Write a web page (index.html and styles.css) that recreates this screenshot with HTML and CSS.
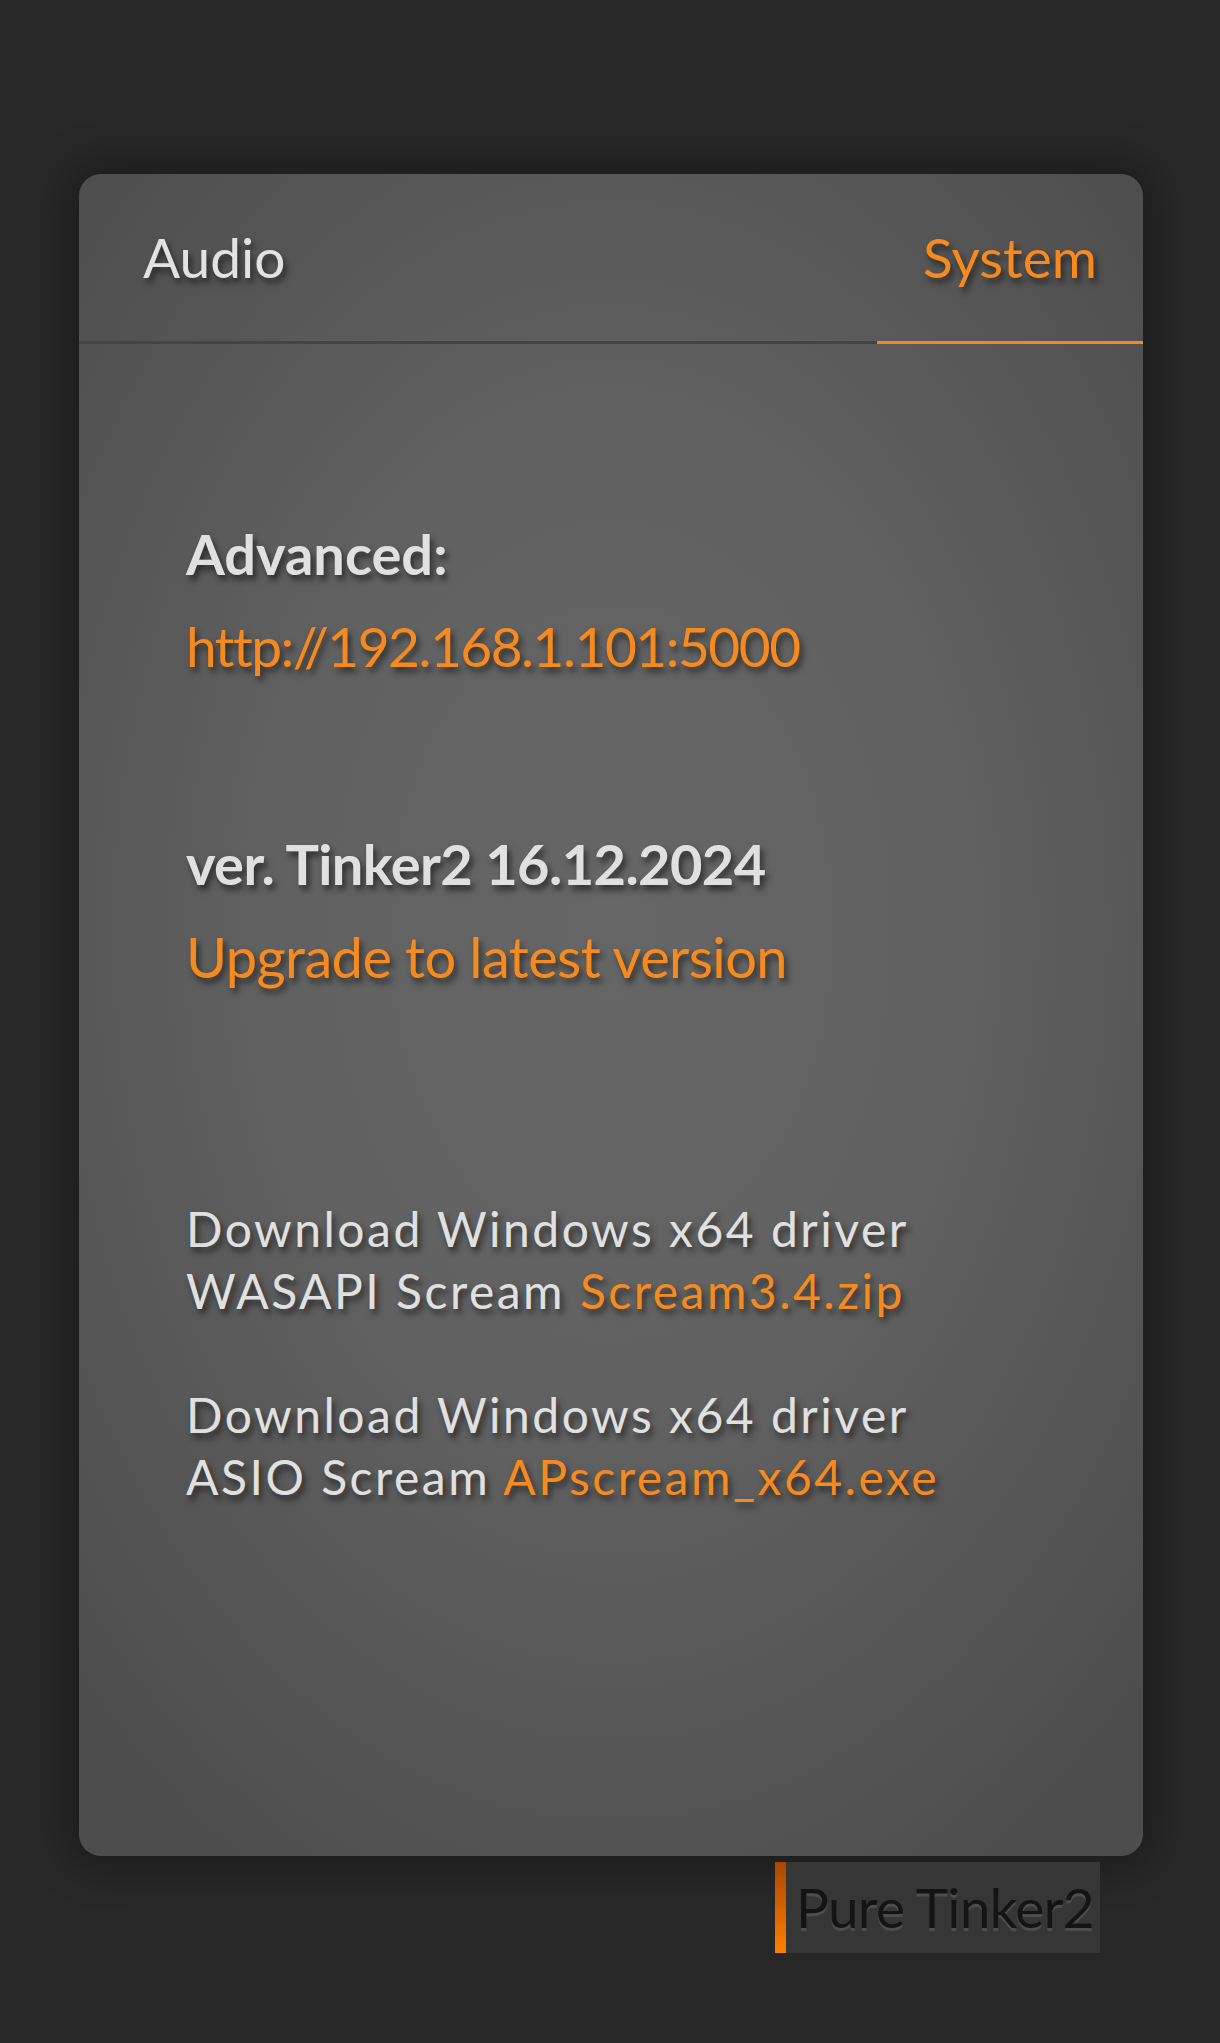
FILE: index.html
```html
<!DOCTYPE html>
<html>
<head>
<meta charset="utf-8">
<link rel="stylesheet" href="styles.css">
</head>
<body>
<div class="page">
  <div class="card">
    <div class="tabs">
      <div class="tab tab-audio">Audio</div>
      <div class="tab tab-system">System</div>
    </div>
    <div class="content">
      <div class="block block-adv">
        <div class="line bold">Advanced:</div>
        <div class="line link url">http://192.168.1.101:5000</div>
      </div>
      <div class="block block-ver">
        <div class="line bold tight">ver. Tinker2 16.12.2024</div>
        <div class="line link tight">Upgrade to latest version</div>
      </div>
      <div class="block block-dl1">
        <div class="small">Download Windows x64 driver</div>
        <div class="small">WASAPI Scream <span class="link">Scream3.4.zip</span></div>
      </div>
      <div class="block block-dl2">
        <div class="small">Download Windows x64 driver</div>
        <div class="small">ASIO Scream <span class="link">APscream_x64.exe</span></div>
      </div>
    </div>
  </div>
  <div class="brand">
    <div class="brand-bar"></div>
    <div class="brand-text">Pure Tinker2</div>
  </div>
</div>
</body>
</html>
```
FILE: styles.css
```css
html, body {
  margin: 0;
  padding: 0;
}
body {
  background: #282828;
  font-family: Lato, "Open Sans", sans-serif;
  color: #e0e0e0;
  width: 1220px;
  height: 2043px;
  overflow: hidden;
}
.page {
  padding-top: 174px;
}
.card {
  margin-left: 79px;
  width: 1064px;
  height: 1682px;
  border-radius: 22px;
  background: radial-gradient(ellipse 70% 65% at 50% 45%, #666666 0%, #616161 45%, #4d4d4d 100%);
  box-shadow: 0 0 40px 12px rgba(0, 0, 0, 0.3);
  overflow: hidden;
}
.tabs {
  display: flex;
  height: 167px;
  border-bottom: 3px solid #444444;
}
.tab {
  font-size: 55px;
  line-height: 167px;
  height: 167px;
  text-shadow: 3px 5px 6px rgba(0, 0, 0, 0.55);
}
.tab-audio {
  flex: 1;
  padding-left: 64px;
  color: #e2e2e2;
}
.tab-system {
  width: 266px;
  text-align: center;
  color: #f78a1f;
  border-bottom: 3px solid #f08a1e;
  margin-bottom: -3px;
}
.content {
  padding-left: 107px;
  padding-top: 163px;
}
.line {
  font-size: 56px;
  line-height: 93px;
  white-space: nowrap;
  text-shadow: 3px 5px 6px rgba(0, 0, 0, 0.55);
}
.url {
  font-size: 55px;
  letter-spacing: -1.5px;
}
.tight {
  letter-spacing: -0.6px;
}
.bold {
  font-weight: 700;
  color: #e0e0e0;
}
.link {
  color: #f78a1f;
}
.small {
  font-size: 48px;
  line-height: 62px;
  letter-spacing: 2.5px;
  white-space: nowrap;
  color: #e0e0e0;
  text-shadow: 3px 5px 6px rgba(0, 0, 0, 0.55);
}
.block-ver {
  margin-top: 124px;
}
.block-dl1 {
  margin-top: 195px;
}
.block-dl2 {
  margin-top: 62px;
}
.brand {
  display: flex;
  margin-top: 6px;
  margin-left: 775px;
  width: 325px;
  height: 91px;
  background: #363636;
}
.brand-bar {
  flex: 0 0 11px;
  width: 11px;
  background: linear-gradient(#a84600, #ff8000);
}
.brand-text {
  padding-left: 10px;
  font-size: 55px;
  letter-spacing: -0.8px;
  line-height: 91px;
  color: #141414;
  text-shadow: 0 3px 1px rgba(255, 255, 255, 0.12);
  white-space: nowrap;
  overflow: hidden;
}
```
